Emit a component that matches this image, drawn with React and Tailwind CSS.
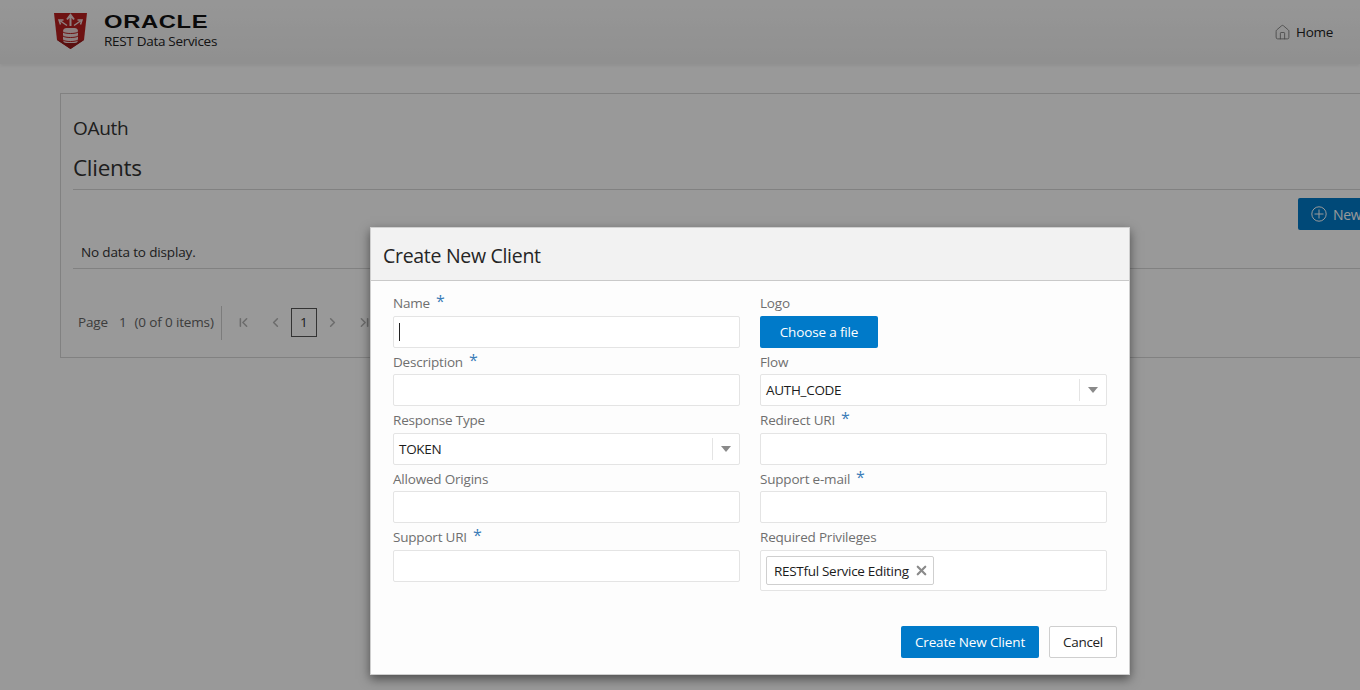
import React from "react";
import { ChevronFirst, ChevronLast, ChevronLeft, ChevronRight, House, X } from "lucide-react";

const font = { fontFamily: '"Open Sans", "Noto Sans", sans-serif' };

function Label({ text, required }) {
  return (
    <div className="h-[26.5px] flex items-end pb-[2.5px] text-[13.5px] leading-[20px] tracking-[-0.2px] text-[#6f6f6f]">
      <span>{text}</span>
      {required && <span className="ml-[6px] mb-[4px] text-[16px] leading-[16px] text-[#3a7cb8]">*</span>}
    </div>
  );
}

function Input({ children }) {
  return (
    <div className="h-8 rounded-[2px] border border-[#e4e4e4] bg-white flex items-center px-[5px]">
      {children}
    </div>
  );
}

function Select({ value }) {
  return (
    <div className="h-8 rounded-[2px] border border-[#e4e4e4] bg-white flex items-center pl-[5px]">
      <span className="flex-1 pt-[1px] text-[13.5px] text-[#1c1c1c]">{value}</span>
      <div className="w-[27px] h-[22px] border-l border-[#e4e4e4] flex items-center justify-center">
        <div className="w-0 h-0 border-l-[5px] border-r-[5px] border-t-[6px] border-l-transparent border-r-transparent border-t-[#8a8a8a]" />
      </div>
    </div>
  );
}

function ShieldLogo() {
  return (
    <svg width="33" height="37" viewBox="0 0 33 37">
      <path d="M0 1h33l-3 27-13.500 9L3 28z" fill="#b81f1f" />
      <path d="M3 28l13.500 9 13.500-9-13.500 2z" fill="#971a1a" />
      <rect x="9" y="16" width="15" height="15" rx="3.500" fill="#ecd5d5" />
      <g stroke="#b81f1f" strokeWidth="1" fill="none">
        <path d="M9 20c2 2 13 2 15 0" />
        <path d="M9 24c2 2 13 2 15 0" />
        <path d="M9 28c2 2 13 2 15 0" />
      </g>
      <path d="M16.500 14V3.500M13 7.500l3.500-4.500 3.500 4.500" stroke="#ecd5d5" strokeWidth="2" fill="none" />
      <path d="M13 13.500 6.500 9M6.500 12.500 5 8h4.500" stroke="#ecd5d5" strokeWidth="1.500" fill="none" />
      <path d="M20 13.500 26.500 9M26.500 12.500 28 8h-4.500" stroke="#ecd5d5" strokeWidth="1.500" fill="none" />
    </svg>
  );
}

export default function App() {
  return (
    <div className="relative w-[1360px] h-[690px] overflow-hidden bg-white tracking-[-0.3px]" style={font}>
      {/* header */}
      <div className="h-16 bg-gradient-to-b from-[#fbfbfb] to-[#f0f0f0] shadow-[0_2px_3px_rgba(0,0,0,0.06)] flex items-center justify-between pl-[54px] pr-[27px]">
        <div className="flex items-start gap-[17px] h-[37px] mt-[-3px]">
          <ShieldLogo />
          <div>
            <div className="h-[20px] w-[104px] text-[18px] leading-[20px] font-bold text-[#111] tracking-[0.5px] origin-left scale-x-[1.32]" style={{ fontFamily: '"Liberation Sans", sans-serif' }}>
              ORACLE
            </div>
            <div className="text-[13.5px] leading-[18px] text-[#222]">REST Data Services</div>
          </div>
        </div>
        <div className="flex items-center gap-[5px] text-[13.5px] text-[#222]">
          <House size={17} strokeWidth={1.2} className="text-[#777]" />
          Home
        </div>
      </div>

      {/* page */}
      <div className="pt-[29px] pl-[60px]">
        <div className="w-[1400px] h-[265px] border border-[#d8d8d8] px-3">
          <div className="pt-[21px] text-[19px] leading-[26px] text-[#333]">OAuth</div>
          <div className="mt-[11px] pb-[5px] text-[22.5px] leading-[32px] text-[#333] border-b border-[#d8d8d8]">Clients</div>
          <div className="h-[41px] flex pl-[1225px] pt-[8px]">
            <div className="w-[100px] h-8 rounded-[2px] bg-[#007ac9] text-white text-[14px] flex items-center pl-[13px] gap-[6px]">
              <svg width="16" height="16" viewBox="0 0 16 16" fill="none" stroke="white" strokeWidth="1">
                <circle cx="8" cy="8" r="7.200" />
                <path d="M8 3.500v9M3.500 8h9" />
              </svg>
              New
            </div>
          </div>
          <div className="h-[38px] border-b border-[#d8d8d8] flex items-center pl-2 pt-[5px] text-[13.500px] tracking-[-0.15px] text-[#333]">No data to display.</div>
          <div className="mt-[28px] h-[50px] flex items-center pl-[5px] pt-[1px] text-[13.500px] tracking-[-0.15px] text-[#666]">
            <span>Page</span>
            <span className="ml-[11px]">1</span>
            <span className="ml-[8px]">(0 of 0 items)</span>
            <div className="ml-[7px] w-px h-[34px] bg-[#cfcfcf]" />
            <ChevronFirst size={15} strokeWidth={2.5} className="ml-[14px] text-[#b5b5b5]" />
            <ChevronLeft size={15} strokeWidth={2.5} className="ml-[17px] text-[#b5b5b5]" />
            <div className="ml-[8px] w-[26px] h-[29px] border border-[#555] flex items-center justify-center text-[#333]">1</div>
            <ChevronRight size={15} strokeWidth={2.5} className="ml-[8px] text-[#b5b5b5]" />
            <ChevronLast size={15} strokeWidth={2.5} className="ml-[17px] text-[#b5b5b5]" />
          </div>
        </div>
      </div>

      {/* dialog overlay */}
      <div className="absolute inset-0 bg-black/40" />
      <div className="absolute left-[370px] top-[227px] w-[760px] h-[448px] bg-[#fdfdfd] border border-[#cfcfcf] shadow-[0_4px_10px_rgba(0,0,0,0.5)] flex flex-col">
        <div className="h-[53px] shrink-0 bg-[#f2f2f2] border-b border-[#c9c9c9] flex items-center pl-3 pt-[4px] text-[19.500px] text-[#252525]">
          Create New Client
        </div>
        <div className="px-[22px] pt-2 grid grid-cols-2 gap-x-5">
          <div>
            <Label text="Name" required />
            <Input>
              <div className="w-px h-[18px] bg-[#222]" />
            </Input>
            <Label text="Description" required />
            <Input />
            <Label text="Response Type" />
            <Select value="TOKEN" />
            <Label text="Allowed Origins" />
            <Input />
            <Label text="Support URI" required />
            <Input />
          </div>
          <div>
            <Label text="Logo" />
            <div className="w-[118px] h-8 pt-[1px] rounded-[2px] bg-[#007ac9] text-white text-[13.500px] tracking-[-0.15px] flex items-center justify-center">Choose a file</div>
            <Label text="Flow" />
            <Select value="AUTH_CODE" />
            <Label text="Redirect URI" required />
            <Input />
            <Label text="Support e-mail" required />
            <Input />
            <Label text="Required Privileges" />
            <div className="h-[41px] rounded-[2px] border border-[#e4e4e4] bg-white flex items-center pl-[5px]">
              <div className="h-[29px] pt-[2px] border border-[#cfcfcf] rounded-[2px] flex items-center pl-[7px] pr-[4px] gap-[5px] text-[13.500px] text-[#1c1c1c]">
                RESTful Service Editing
                <X size={15} strokeWidth={3.5} className="text-[#8a8a8a] mb-[2px]" />
              </div>
            </div>
          </div>
        </div>
        <div className="mt-auto pb-[16px] pr-3 flex justify-end gap-[10px]">
          <div className="w-[138px] h-8 rounded-[2px] bg-[#007ac9] text-white text-[13.500px] tracking-[-0.15px] flex items-center justify-center">Create New Client</div>
          <div className="w-[68px] h-8 rounded-[2px] border border-[#cfcfcf] bg-white text-[#222] text-[13.500px] flex items-center justify-center">Cancel</div>
        </div>
      </div>
    </div>
  );
}
